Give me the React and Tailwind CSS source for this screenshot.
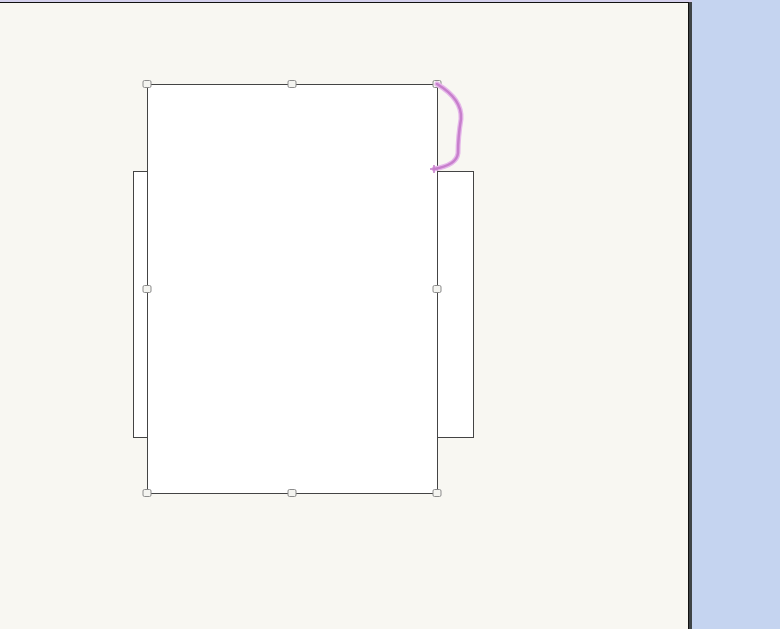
export default function App() {
  // handle centres in canvas coords (canvas starts at y=3)
  const handles = [
    [147, 81], [292, 81], [437, 81],
    [147, 286], [437, 286],
    [147, 490], [292, 490], [437, 490],
  ];
  return (
    <div className="flex h-[629px] w-[780px] overflow-hidden font-['Liberation_Sans',sans-serif]">
      <div className="flex w-[692px] flex-col">
        <div className="h-[2px] bg-[#d4d0ec]" />
        <div className="flex flex-1">
          <div className="relative w-[689px] border-t border-r border-[#111] bg-[#f8f7f2]">
            {/* back shape */}
            <div className="absolute left-[133px] top-[168px] h-[267px] w-[341px] border border-[#444] bg-white" />
            {/* front shape */}
            <div className="absolute left-[147px] top-[81px] h-[410px] w-[291px] border border-[#444] bg-white" />
            {handles.map(([x, y], i) => (
              <div
                key={i}
                className="absolute h-[8px] w-[9px] -translate-x-1/2 -translate-y-1/2 rounded-[2px] border border-[#8c8c8c] bg-[#f4f4f0]"
                style={{ left: x, top: y }}
              />
            ))}
            <svg className="absolute left-0 top-0" width="689" height="626">
              <path
                d="M437 81 C452 90 462 102 461 116 C459 128 458 138 458 150 C457 160 446 164 434 166"
                fill="none"
                stroke="#e6b8ea"
                strokeWidth="5"
                strokeLinecap="round"
              />
              <path
                d="M437 81 C452 90 462 102 461 116 C459 128 458 138 458 150 C457 160 446 164 434 166"
                fill="none"
                stroke="#c77fcc"
                strokeWidth="2.5"
                strokeLinecap="round"
              />
              <path d="M430 166 H438 M434 162 V170" stroke="#c77fcc" strokeWidth="1.5" />
            </svg>
          </div>
          <div className="w-[3px] bg-[#3f4446]" />
        </div>
      </div>
      <div className="flex-1 bg-[#c5d4f0]" />
    </div>
  );
}
